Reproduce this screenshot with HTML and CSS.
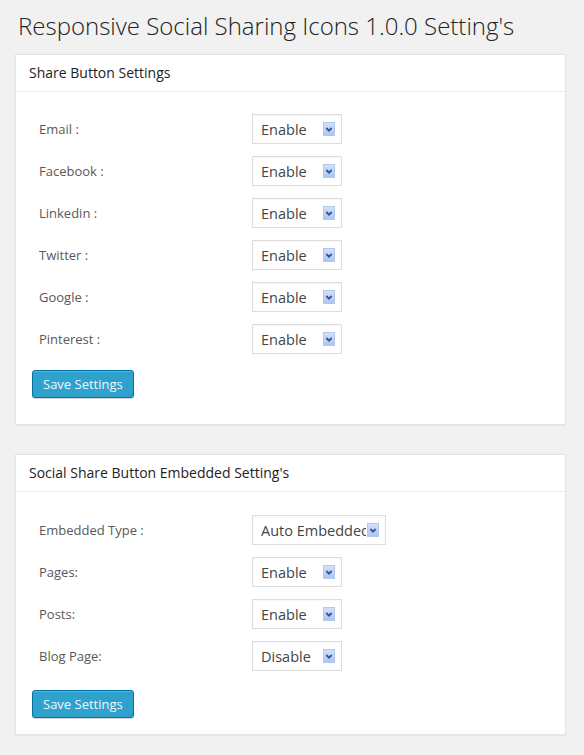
FILE: index.html
```html
<!DOCTYPE html>
<html>
<head>
<meta charset="utf-8">
<link rel="stylesheet" href="styles.css">
</head>
<body>
<div class="wrap">
  <h1 class="title">Responsive Social Sharing Icons 1.0.0 Setting's</h1>

  <div class="box">
    <div class="box-head">Share Button Settings</div>
    <div class="box-body">
      <div class="form">
        <label class="lbl">Email :</label>
        <span class="sel"><select><option>Enable</option><option>Disable</option></select><span class="arrow"><svg viewBox="0 0 12 13" width="12" height="13"><path d="M3.3 5 L6 7.7 L8.7 5" fill="none" stroke="#34549a" stroke-width="1.8"/></svg></span></span>
        <label class="lbl">Facebook :</label>
        <span class="sel"><select><option>Enable</option><option>Disable</option></select><span class="arrow"><svg viewBox="0 0 12 13" width="12" height="13"><path d="M3.3 5 L6 7.7 L8.7 5" fill="none" stroke="#34549a" stroke-width="1.8"/></svg></span></span>
        <label class="lbl">Linkedin :</label>
        <span class="sel"><select><option>Enable</option><option>Disable</option></select><span class="arrow"><svg viewBox="0 0 12 13" width="12" height="13"><path d="M3.3 5 L6 7.7 L8.7 5" fill="none" stroke="#34549a" stroke-width="1.8"/></svg></span></span>
        <label class="lbl">Twitter :</label>
        <span class="sel"><select><option>Enable</option><option>Disable</option></select><span class="arrow"><svg viewBox="0 0 12 13" width="12" height="13"><path d="M3.3 5 L6 7.7 L8.7 5" fill="none" stroke="#34549a" stroke-width="1.8"/></svg></span></span>
        <label class="lbl">Google :</label>
        <span class="sel"><select><option>Enable</option><option>Disable</option></select><span class="arrow"><svg viewBox="0 0 12 13" width="12" height="13"><path d="M3.3 5 L6 7.7 L8.7 5" fill="none" stroke="#34549a" stroke-width="1.8"/></svg></span></span>
        <label class="lbl">Pinterest :</label>
        <span class="sel"><select><option>Enable</option><option>Disable</option></select><span class="arrow"><svg viewBox="0 0 12 13" width="12" height="13"><path d="M3.3 5 L6 7.7 L8.7 5" fill="none" stroke="#34549a" stroke-width="1.8"/></svg></span></span>
      </div>
      <button class="btn" type="button">Save Settings</button>
    </div>
  </div>

  <div class="box">
    <div class="box-head">Social Share Button Embedded Setting's</div>
    <div class="box-body box-body-b">
      <div class="form">
        <label class="lbl">Embedded Type :</label>
        <span class="sel sel-wide"><select><option>Auto Embedded</option><option>Manual</option></select><span class="arrow"><svg viewBox="0 0 12 13" width="12" height="13"><path d="M3.3 5 L6 7.7 L8.7 5" fill="none" stroke="#34549a" stroke-width="1.8"/></svg></span></span>
        <label class="lbl">Pages:</label>
        <span class="sel"><select><option>Enable</option><option>Disable</option></select><span class="arrow"><svg viewBox="0 0 12 13" width="12" height="13"><path d="M3.3 5 L6 7.7 L8.7 5" fill="none" stroke="#34549a" stroke-width="1.8"/></svg></span></span>
        <label class="lbl">Posts:</label>
        <span class="sel"><select><option>Enable</option><option>Disable</option></select><span class="arrow"><svg viewBox="0 0 12 13" width="12" height="13"><path d="M3.3 5 L6 7.7 L8.7 5" fill="none" stroke="#34549a" stroke-width="1.8"/></svg></span></span>
        <label class="lbl">Blog Page:</label>
        <span class="sel"><select><option>Disable</option><option>Enable</option></select><span class="arrow"><svg viewBox="0 0 12 13" width="12" height="13"><path d="M3.3 5 L6 7.7 L8.7 5" fill="none" stroke="#34549a" stroke-width="1.8"/></svg></span></span>
      </div>
      <button class="btn" type="button">Save Settings</button>
    </div>
  </div>
</div>
</body>
</html>
```

FILE: styles.css
```css
html, body {
  margin: 0;
  padding: 0;
  background: #f1f1f1;
}
body {
  font-family: "Open Sans", "Liberation Sans", sans-serif;
  color: #444;
}
.wrap {
  padding: 0 18px 0 15px;
}
.title {
  margin: 0;
  padding: 10px 0 0 3px;
  height: 54px;
  box-sizing: border-box;
  font-size: 24px;
  font-weight: 300;
  line-height: 32px;
  color: #222;
}
.box {
  background: #fff;
  border: 1px solid #e5e5e5;
  box-shadow: 0 1px 1px rgba(0, 0, 0, 0.04);
  margin-bottom: 29px;
}
.box-head {
  height: 36px;
  line-height: 36px;
  padding: 0 13px;
  font-size: 14px;
  color: #222;
  border-bottom: 1px solid #eee;
}
.box-body {
  padding: 22px 16px 26px 16px;
}
.box-body-b {
  padding-top: 23px;
  padding-bottom: 16px;
}
.box-body-b .form {
  margin-bottom: 19px;
}
.form {
  display: grid;
  grid-template-columns: 213px auto;
  row-gap: 12px;
  align-items: center;
  padding-left: 7px;
  margin-bottom: 16px;
}
.lbl {
  font-size: 13px;
  color: #595959;
}
.sel {
  position: relative;
  display: inline-block;
  justify-self: start;
  width: 90px;
  height: 30px;
}
.sel-wide {
  width: 134px;
}
.sel select {
  -webkit-appearance: none;
  appearance: none;
  width: 100%;
  height: 30px;
  box-sizing: border-box;
  margin: 0;
  border: 1px solid #ddd;
  border-radius: 0;
  background: #fff;
  padding: 0 19px 0 8px;
  font-family: "Open Sans", "Liberation Sans", sans-serif;
  font-size: 14.5px;
  color: #444;
  box-shadow: inset 0 1px 2px rgba(0, 0, 0, 0.04);
  outline: none;
}
.arrow {
  position: absolute;
  right: 7px;
  top: 8px;
  width: 12px;
  height: 14px;
  box-sizing: border-box;
  background: linear-gradient(#d3e1f9, #adc6f1);
  border: 1px solid #b3c8ec;
  display: flex;
  align-items: center;
  justify-content: center;
  pointer-events: none;
}
.arrow svg {
  display: block;
  flex: none;
}
.btn {
  display: block;
  height: 28px;
  padding: 0 10px;
  font-family: "Open Sans", "Liberation Sans", sans-serif;
  font-size: 13px;
  color: #f0f8fc;
  background: #2ea2cc;
  border: 1px solid #0074a2;
  border-radius: 3px;
  box-shadow: inset 0 1px 0 rgba(120, 200, 230, 0.5), 0 1px 0 rgba(0, 0, 0, 0.15);
  cursor: pointer;
}
```
